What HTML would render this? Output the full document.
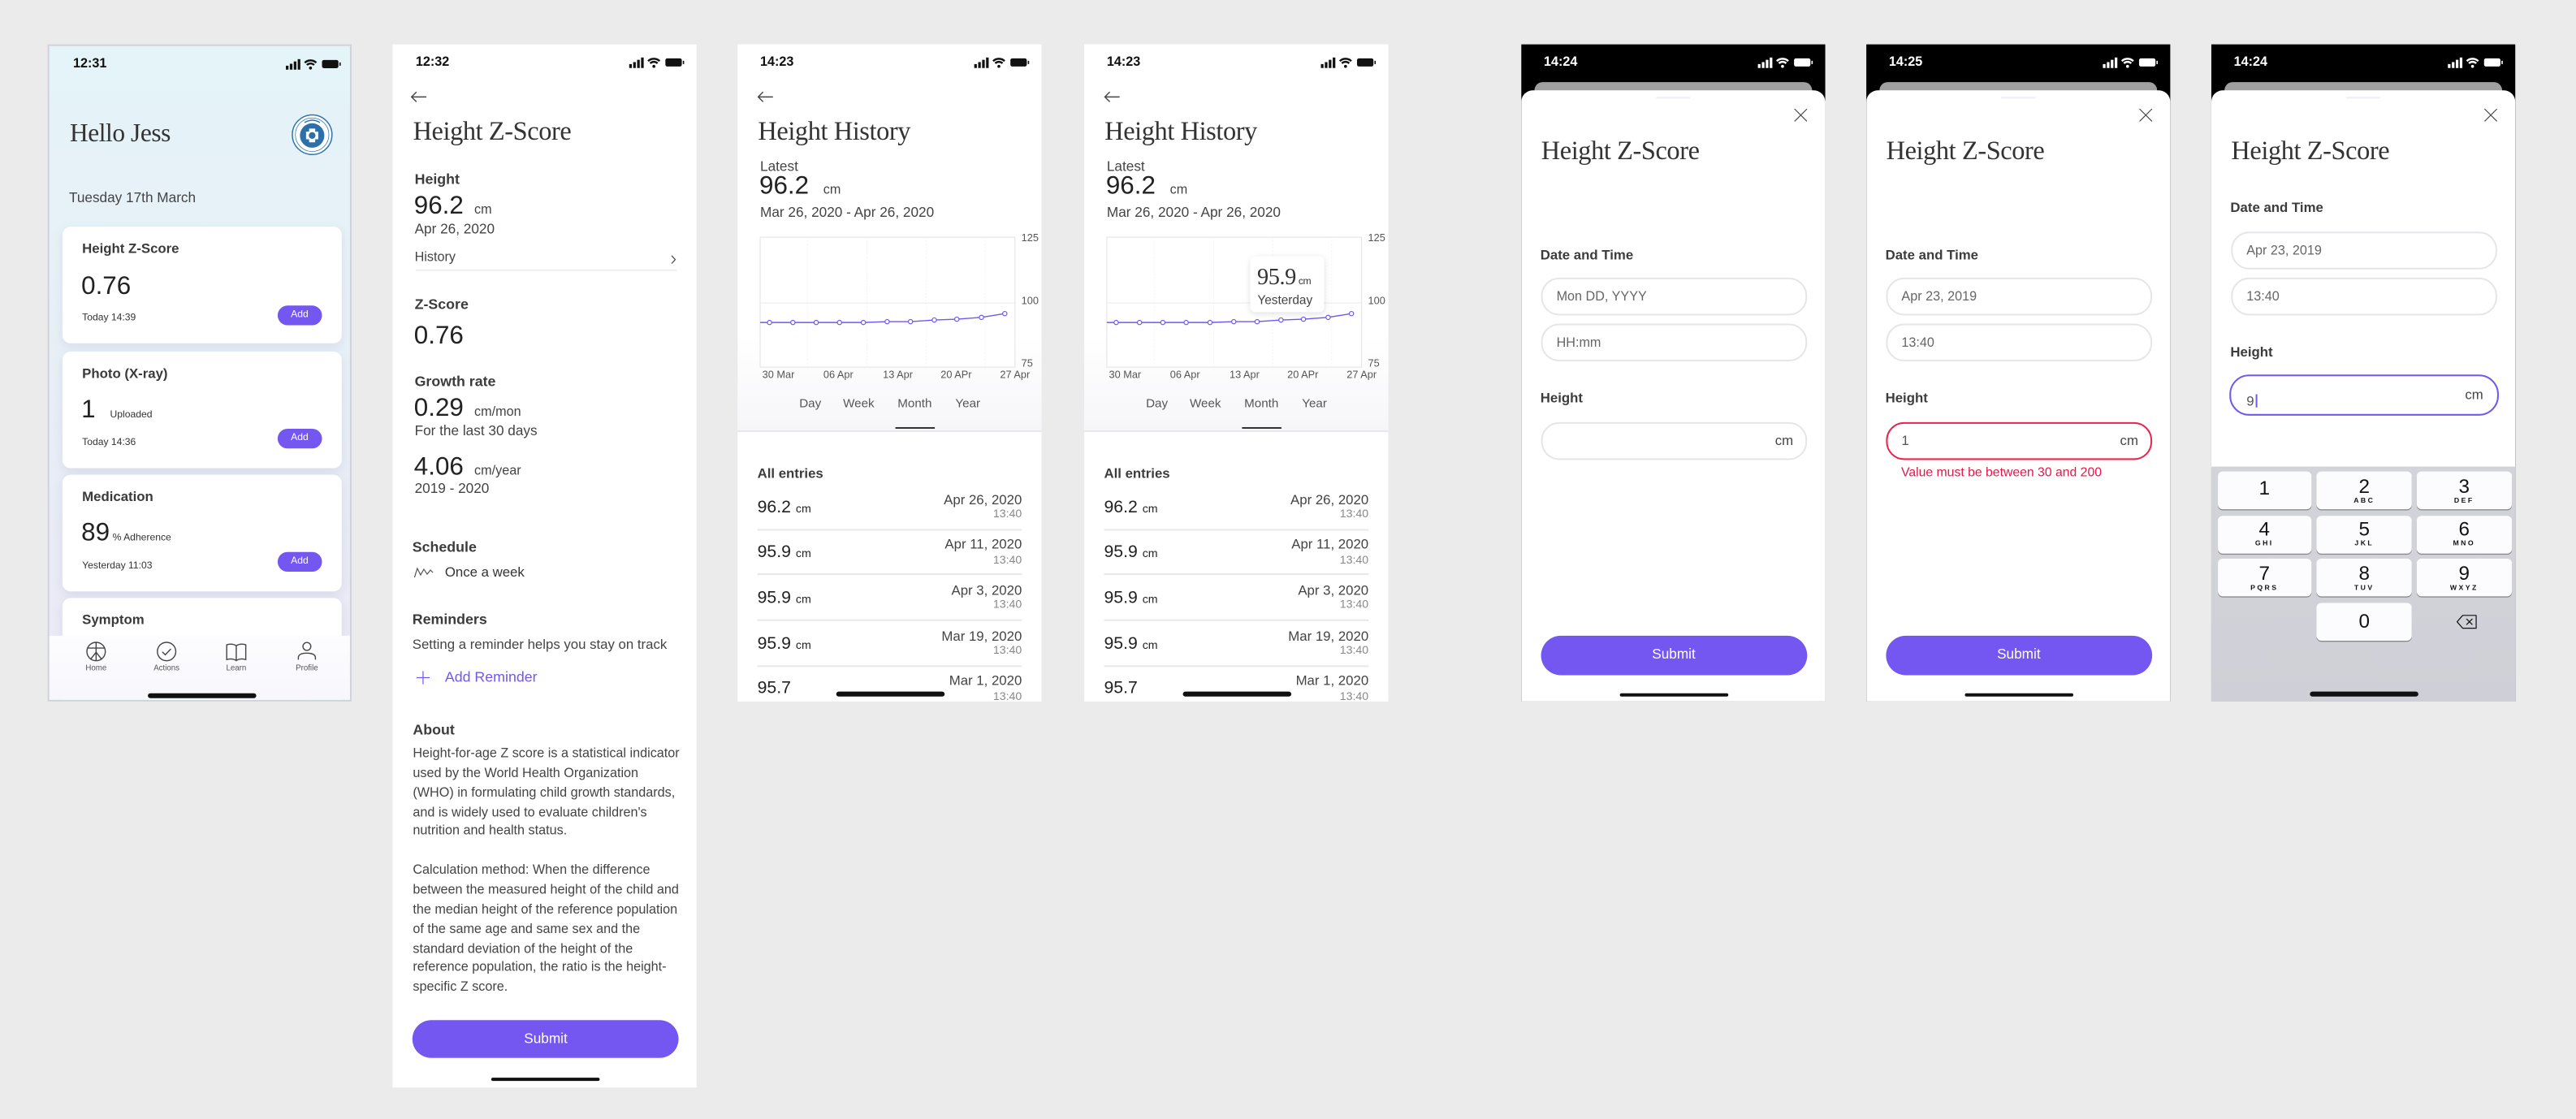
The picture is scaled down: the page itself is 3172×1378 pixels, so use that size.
<!DOCTYPE html>
<html><head><meta charset="utf-8">
<style>
*{margin:0;padding:0;box-sizing:border-box}
html,body{width:3172px;height:1378px;overflow:hidden;background:#ebebeb}
#w{position:absolute;left:0;top:0;width:1568px;height:681px;transform:scale(2.023);transform-origin:0 0;font-family:"Liberation Sans",sans-serif;color:#333}
.ph{position:absolute;top:27px;width:185px;height:400px;background:#fff;overflow:hidden}
.t{position:absolute;line-height:0;white-space:nowrap}
.serif{font-family:"Liberation Serif",serif;color:#333;letter-spacing:-0.2px}
.b{font-weight:bold}
.card{position:absolute;left:8px;width:169.6px;height:71px;background:#fff;border-radius:5px;box-shadow:0 2px 6px rgba(110,120,170,.14)}
.add{position:absolute;left:130.6px;top:47.6px;width:27.6px;height:11.6px;border-radius:6px;background:#7357f0}
.add span{position:absolute;left:0;right:0;top:5.8px;line-height:0;text-align:center;color:#fff;font-size:6px}
.hi{position:absolute;left:60px;width:66px;height:2.6px;border-radius:2px;background:#111}
.inp{position:absolute;left:11.6px;width:162.2px;height:23.3px;border:0.6px solid #e6e6ea;border-radius:11px;background:#fff}
.btn{position:absolute;left:11.8px;width:162px;height:23.8px;border-radius:12px;background:#7357f0;color:#fff;font-size:8.5px;text-align:center;line-height:23.8px}
.key{position:absolute;width:57.6px;height:23px;background:#fcfcfe;border-radius:3px;box-shadow:0 0.7px 0 #8a8b90;text-align:center}
.key .n{position:absolute;left:0;right:0;top:9px;font-size:12px;line-height:0;color:#111}
.key .l{position:absolute;left:0;right:0;top:17.5px;font-size:4.3px;line-height:0;font-weight:bold;letter-spacing:1.2px;color:#111}
</style></head><body><div id="w">

<div class="ph" style="left:29px;background:linear-gradient(180deg,#e4f4f8 0%,#e7f1f7 35%,#e9ebf5 80%,#ecebf6 100%);border:0.5px solid #cfd3da">
 <div class="t b" style="left:14.5px;top:11px;font-size:8px;color:#111">12:31</div>
 <svg style="position:absolute;left:143px;top:7px" width="36" height="8" viewBox="0 0 36 8"><rect x="1" y="5" width="1.6" height="2.4" fill="#111"/><rect x="3.4" y="3.8" width="1.6" height="3.6" fill="#111"/><rect x="5.8" y="2.4" width="1.6" height="5" fill="#111"/><rect x="8.2" y="1" width="1.6" height="6.4" fill="#111"/><path d="M12.5 3.2a5 5 0 0 1 7 0M13.8 4.6a3 3 0 0 1 4.4 0" stroke="#111" stroke-width="1.2" fill="none"/><circle cx="16" cy="6.4" r="0.9" fill="#111"/><rect x="23" y="1.5" width="10" height="5" rx="1.2" fill="#111"/><rect x="33.6" y="3" width="0.8" height="2" fill="#111"/></svg>
 <div class="t serif" style="left:12.5px;top:54px;font-size:15.5px">Hello Jess</div>
 <svg style="position:absolute;left:147.4px;top:41px" width="26" height="26" viewBox="0 0 28 28"><circle cx="14" cy="14" r="13" fill="#fff" stroke="#2b74b0" stroke-width="0.8"/><circle cx="14" cy="14" r="11" fill="none" stroke="#2b74b0" stroke-width="0.4"/><circle cx="14" cy="14.5" r="8" fill="#2d6fa8"/><path d="M10 12h8v5h-8z" fill="#fff"/><path d="M12 10h4v9h-4z" fill="#fff"/><circle cx="14" cy="14.5" r="2.2" fill="#2d6fa8"/><path d="M9 6q5-3 10 0" stroke="#2b74b0" stroke-width="0.8" fill="none"/></svg>
 <div class="t" style="left:12px;top:91.5px;font-size:8.5px;color:#444">Tuesday 17th March</div>

 <div class="card" style="top:110.4px">
  <div class="t b" style="left:12px;top:13px;font-size:8.3px;color:#3a3a3a">Height Z-Score</div>
  <div class="t" style="left:11.5px;top:36.5px;font-size:15.5px;color:#222">0.76</div>
  <div class="t" style="left:12px;top:56px;font-size:6px;color:#333">Today 14:39</div>
  <div class="add"><span>Add</span></div>
 </div>
 <div class="card" style="top:185.6px">
  <div class="t b" style="left:12px;top:13px;font-size:8.3px;color:#3a3a3a">Photo (X-ray)</div>
  <div class="t" style="left:11.5px;top:36.5px;font-size:15.5px;color:#222">1</div>
  <div class="t" style="left:29px;top:39.5px;font-size:6px;color:#333">Uploaded</div>
  <div class="t" style="left:12px;top:56px;font-size:6px;color:#333">Today 14:36</div>
  <div class="add"><span>Add</span></div>
 </div>
 <div class="card" style="top:260.6px">
  <div class="t b" style="left:12px;top:13px;font-size:8.3px;color:#3a3a3a">Medication</div>
  <div class="t" style="left:11.5px;top:36.5px;font-size:15.5px;color:#222">89</div>
  <div class="t" style="left:30.5px;top:39.5px;font-size:6px;color:#333">% Adherence</div>
  <div class="t" style="left:12px;top:56px;font-size:6px;color:#333">Yesterday 11:03</div>
  <div class="add"><span>Add</span></div>
 </div>
 <div class="card" style="top:336.3px">
  <div class="t b" style="left:12px;top:13px;font-size:8.3px;color:#3a3a3a">Symptom</div>
 </div>
 <div style="position:absolute;left:0;top:358.8px;width:185px;height:42px;background:linear-gradient(180deg,#fdfdff,#f7f6fc)"></div>
 <svg style="position:absolute;left:0;top:359px" width="185" height="30" viewBox="0 359 185 30">
  <g fill="none" stroke="#444" stroke-width="0.7">
   <circle cx="28.5" cy="368.6" r="5.6"/><path d="M28.5 363v11.2M23.5 366.5h10M28.5 369l-3.5 4.5M28.5 369l3.5 4.5"/>
   <circle cx="71.4" cy="368.6" r="5.6"/><path d="M68.8 368.8l1.8 1.8 3.4-3.6"/>
   <path d="M108 364.5q3-1 5.8 0.5v9q-2.8-1.5-5.8-0.5zM119.6 364.5q-3-1-5.8 0.5v9q2.8-1.5 5.8-0.5z"/>
   <circle cx="156.8" cy="365.5" r="2.4"/><path d="M151.6 373.6v-1.2q0-2.8 5.2-2.8t5.2 2.8v1.2"/>
  </g>
  <g font-size="4.8" fill="#555" text-anchor="middle" font-family="Liberation Sans"><text x="28.5" y="380">Home</text><text x="71.4" y="380">Actions</text><text x="113.8" y="380">Learn</text><text x="156.8" y="380">Profile</text></g>
 </svg>
 <div class="hi" style="top:394px"></div>
</div>

<div class="ph" style="left:239px;height:635px">
 <div class="t b" style="left:14px;top:11px;font-size:8px;color:#111">12:32</div>
 <svg style="position:absolute;left:143px;top:7px" width="36" height="8" viewBox="0 0 36 8"><rect x="1" y="5" width="1.6" height="2.4" fill="#111"/><rect x="3.4" y="3.8" width="1.6" height="3.6" fill="#111"/><rect x="5.8" y="2.4" width="1.6" height="5" fill="#111"/><rect x="8.2" y="1" width="1.6" height="6.4" fill="#111"/><path d="M12.5 3.2a5 5 0 0 1 7 0M13.8 4.6a3 3 0 0 1 4.4 0" stroke="#111" stroke-width="1.2" fill="none"/><circle cx="16" cy="6.4" r="0.9" fill="#111"/><rect x="23" y="1.5" width="10" height="5" rx="1.2" fill="#111"/><rect x="33.6" y="3" width="0.8" height="2" fill="#111"/></svg>
 <svg style="position:absolute;left:10px;top:28px" width="12" height="8" viewBox="0 0 12 8"><path d="M10.5 4H1.5M4.5 1L1.5 4l3 3" stroke="#444" stroke-width="0.7" fill="none"/></svg>
 <div class="t serif" style="left:12.4px;top:54px;font-size:16px">Height Z-Score</div>
 <div class="t b" style="left:13.4px;top:82px;font-size:8.8px;color:#3c3c3c">Height</div>
 <div class="t" style="left:13px;top:99px;font-size:15.5px;color:#222">96.2 <span style="font-size:8px;color:#444">&nbsp;cm</span></div>
 <div class="t" style="left:13.4px;top:112.2px;font-size:8.5px;color:#444">Apr 26, 2020</div>
 <div class="t" style="left:13.4px;top:129.8px;font-size:8px;color:#444">History</div>
 <svg style="position:absolute;left:168.5px;top:127.5px" width="4" height="6" viewBox="0 0 4 6"><path d="M0.8 0.6L3 3 0.8 5.4" stroke="#444" stroke-width="0.6" fill="none"/></svg>
 <div style="position:absolute;left:13.6px;top:137px;width:159.4px;height:0.8px;background:#eef0f3"></div>
 <div class="t b" style="left:13.4px;top:158px;font-size:8.8px;color:#3c3c3c">Z-Score</div>
 <div class="t" style="left:13px;top:177.6px;font-size:15.5px;color:#222">0.76</div>
 <div class="t b" style="left:13.4px;top:204.5px;font-size:8.8px;color:#3c3c3c">Growth rate</div>
 <div class="t" style="left:13px;top:221.6px;font-size:15.5px;color:#222">0.29 <span style="font-size:8px;color:#444">&nbsp;cm/mon</span></div>
 <div class="t" style="left:13.4px;top:235px;font-size:8.5px;color:#444">For the last 30 days</div>
 <div class="t" style="left:13px;top:257.5px;font-size:15.5px;color:#222">4.06 <span style="font-size:8px;color:#444">&nbsp;cm/year</span></div>
 <div class="t" style="left:13.4px;top:270.4px;font-size:8.5px;color:#444">2019 - 2020</div>
 <div class="t b" style="left:12px;top:306px;font-size:8.8px;color:#3c3c3c">Schedule</div>
 <svg style="position:absolute;left:13px;top:317px" width="12" height="8" viewBox="0 0 12 8"><path d="M0.3 7.5L2 2l2 4 2-3.5 2 3 2-2.5 1.5 1.5" stroke="#555" stroke-width="0.6" fill="none"/></svg>
 <div class="t" style="left:31.8px;top:321.3px;font-size:8.3px;color:#333">Once a week</div>
 <div class="t b" style="left:12px;top:349.8px;font-size:8.8px;color:#3c3c3c">Reminders</div>
 <div class="t" style="left:12px;top:364.5px;font-size:8.3px;color:#444">Setting a reminder helps you stay on track</div>
 <svg style="position:absolute;left:14px;top:381px" width="9" height="9" viewBox="0 0 9 9"><path d="M4.5 0.5v8M0.5 4.5h8" stroke="#7357f0" stroke-width="0.6"/></svg>
 <div class="t" style="left:31.8px;top:385.2px;font-size:8.8px;color:#7357f0">Add Reminder</div>
 <div class="t b" style="left:12.3px;top:417px;font-size:8.8px;color:#3c3c3c">About</div>
 <div style="position:absolute;left:12.3px;top:425.97px;font-size:8px;line-height:11.86px;color:#444;width:170px;white-space:nowrap">Height-for-age Z score is a statistical indicator<br>used by the World Health Organization<br>(WHO) in formulating child growth standards,<br>and is widely used to evaluate children's<br>nutrition and health status.<br><br>Calculation method: When the difference<br>between the measured height of the child and<br>the median height of the reference population<br>of the same age and same sex and the<br>standard deviation of the height of the<br>reference population, the ratio is the height-<br>specific Z score.</div>
 <div class="btn" style="left:12.3px;top:593.5px;width:161.8px;height:23.5px;line-height:23.5px">Submit</div>
 <div class="hi" style="top:628.7px"></div>
</div>

<div class="ph" style="left:449px" id="p3"></div>
<div class="ph" style="left:660px" id="p4"></div>
<div class="ph" style="left:926px;background:#000" id="p5"></div>
<div class="ph" style="left:1136px;background:#000" id="p6"></div>
<div class="ph" style="left:1346px;background:#000" id="p7"></div>

</div>
<script>
var SB=function(c){return '<svg style="position:absolute;left:143px;top:7px" width="36" height="8" viewBox="0 0 36 8"><rect x="1" y="5" width="1.6" height="2.4" fill="'+c+'"/><rect x="3.4" y="3.8" width="1.6" height="3.6" fill="'+c+'"/><rect x="5.8" y="2.4" width="1.6" height="5" fill="'+c+'"/><rect x="8.2" y="1" width="1.6" height="6.4" fill="'+c+'"/><path d="M12.5 3.2a5 5 0 0 1 7 0M13.8 4.6a3 3 0 0 1 4.4 0" stroke="'+c+'" stroke-width="1.2" fill="none"/><circle cx="16" cy="6.4" r="0.9" fill="'+c+'"/><rect x="23" y="1.5" width="10" height="5" rx="1.2" fill="'+c+'"/><rect x="33.6" y="3" width="0.8" height="2" fill="'+c+'"/></svg>';};
function hist(tip,time){
 var xs=[19.4,33.6,47.8,62,76.5,91,105.2,119.7,133.4,148.4,162.6],ys=[169.3,169.3,169.3,169.3,169.3,168.8,168.8,167.8,167.3,166.2,163.9];
 var pts='13.7,169.3 ';var c='';
 for(var i=0;i<xs.length;i++){pts+=xs[i]+','+ys[i]+' ';c+='<circle cx="'+xs[i]+'" cy="'+ys[i]+'" r="1.3" fill="#fff" stroke="#7357f0" stroke-width="0.6"/>';}
 var h='<div style="position:absolute;left:0;top:0;width:185px;height:236px;background:linear-gradient(180deg,#fff 0%,#fff 75%,#f6f6f9 100%)"></div>';
 h+='<div class="t b" style="left:13.7px;top:11px;font-size:8px;color:#111">'+time+'</div>'+SB('#111');
 h+='<svg style="position:absolute;left:11px;top:28px" width="12" height="8" viewBox="0 0 12 8"><path d="M10.5 4H1.5M4.5 1L1.5 4l3 3" stroke="#444" stroke-width="0.7" fill="none"/></svg>';
 h+='<div class="t serif" style="left:12.4px;top:54.3px;font-size:16px">Height History</div>';
 h+='<div class="t" style="left:13.7px;top:73.5px;font-size:8.5px;color:#444">Latest</div>';
 h+='<div class="t" style="left:13.2px;top:87px;font-size:15.5px;color:#222">96.2 <span style="font-size:8px;color:#444">&nbsp;&nbsp;cm</span></div>';
 h+='<div class="t" style="left:13.7px;top:101.6px;font-size:8.5px;color:#444">Mar 26, 2020 - Apr 26, 2020</div>';
 h+='<svg style="position:absolute;left:0;top:0" width="185" height="236" viewBox="0 0 185 236"><rect x="13.7" y="117.4" width="155.1" height="79.1" fill="#fff" stroke="#e2e2e6" stroke-width="0.5"/>'+
 '<g stroke="#f0f0f3" stroke-width="0.4" stroke-dasharray="1 1"><path d="M42.5 117.4v79M78.7 117.4v79M114.7 117.4v79M150.6 117.4v79"/></g><path d="M13.7 157.4h155.1" stroke="#e8e8ec" stroke-width="0.5"/>'+
 '<polyline points="'+pts+'" fill="none" stroke="#7357f0" stroke-width="0.7"/>'+c+
 '<g font-family="Liberation Sans" font-size="6.3" fill="#555"><text x="172.7" y="119.8">125</text><text x="172.7" y="158.2">100</text><text x="172.7" y="196.3">75</text>'+
 '<g text-anchor="middle"><text x="24.8" y="203.2">30 Mar</text><text x="61.3" y="203.2">06 Apr</text><text x="97.5" y="203.2">13 Apr</text><text x="133" y="203.2">20 APr</text><text x="168.8" y="203.2">27 Apr</text></g></g></svg>';
 var tabs=[['Day',44.2],['Week',73.7],['Month',107.8],['Year',140.1]];
 for(var j=0;j<4;j++)h+='<div class="t" style="left:'+(tabs[j][1]-20)+'px;width:40px;text-align:center;top:219.2px;font-size:7.5px;color:#555">'+tabs[j][0]+'</div>';
 h+='<div style="position:absolute;left:96px;top:232.6px;width:24.3px;height:0.9px;background:#333"></div>';
 h+='<div style="position:absolute;left:0;top:235px;width:185px;height:0.5px;background:#e8e8ec"></div>';
 h+='<div class="t b" style="left:12px;top:261.4px;font-size:8.3px;color:#3c3c3c">All entries</div>';
 var rows=[['96.2','Apr 26, 2020'],['95.9','Apr 11, 2020'],['95.9','Apr 3, 2020'],['95.9','Mar 19, 2020'],['95.7','Mar 1, 2020']];
 for(var k=0;k<5;k++){var y=281.5+27.7*k;
  h+='<div class="t" style="left:12px;top:'+y+'px;font-size:10.5px;color:#222">'+rows[k][0]+(k<4?' <span style="font-size:7px">cm</span>':'')+'</div>';
  h+='<div class="t" style="right:12px;top:'+(y-4.9)+'px;font-size:8.3px;color:#444">'+rows[k][1]+'</div>';
  h+='<div class="t" style="right:12px;top:'+(y+5.5)+'px;font-size:7px;color:#888">13:40</div>';
  if(k<4)h+='<div style="position:absolute;left:12px;top:'+(y+13.2)+'px;width:161px;height:0.5px;background:#e8e8ec"></div>';}
 if(tip){h+='<div style="position:absolute;left:101.3px;top:128.5px;width:44.5px;height:34.9px;background:#fff;border-radius:3px;box-shadow:0 1px 4px rgba(0,0,0,.12)"></div>'+
  '<div class="t serif" style="left:105.2px;top:142.7px;font-size:14px;color:#333">95.9<span style="font-size:6px;font-family:Liberation Sans"> cm</span></div>'+
  '<div class="t" style="left:105.4px;top:156.2px;font-size:7.6px;color:#444">Yesterday</div>';}
 h+='<div class="hi" style="top:394px"></div>';
 return h;}
document.getElementById('p3').innerHTML=hist(false,'14:23');
document.getElementById('p4').innerHTML=hist(true,'14:23');

function sheet(time,o){
 var h='<div class="t b" style="left:13.7px;top:11.3px;font-size:8px;color:#fff">'+time+'</div>'+SB('#fff');
 h+='<div style="position:absolute;left:7.8px;top:22.7px;width:169.2px;height:10px;border-radius:5px 5px 0 0;background:#a0a0a0"></div>';
 h+='<div style="position:absolute;left:0;top:27.7px;width:185px;height:380px;border-radius:7px 7px 0 0;background:#fff"></div>';
 h+='<div style="position:absolute;left:82px;top:31.7px;width:21.4px;height:1.3px;border-radius:1px;background:#eeeef8"></div>';
 h+='<svg style="position:absolute;left:166px;top:39.3px" width="8.2" height="8.2" viewBox="0 0 8 8"><path d="M0.3 0.3l7.4 7.4M7.7 0.3L0.3 7.7" stroke="#444" stroke-width="0.55"/></svg>';
 h+='<div class="t serif" style="left:12.1px;top:'+o.ty+'px;font-size:16px">Height Z-Score</div>';
 h+='<div class="t b" style="left:11.6px;top:'+o.dy+'px;font-size:8.3px;color:#3c3c3c">Date and Time</div>';
 h+='<div class="inp" style="top:'+o.i1+'px"></div><div class="t" style="left:21.4px;top:'+(o.i1+11.6)+'px;font-size:8px;color:#666">'+o.v1+'</div>';
 h+='<div class="inp" style="top:'+(o.i1+28.2)+'px"></div><div class="t" style="left:21.4px;top:'+(o.i1+39.8)+'px;font-size:8px;color:#666">'+o.v2+'</div>';
 h+='<div class="t b" style="left:11.6px;top:'+o.hy+'px;font-size:8.3px;color:#3c3c3c">Height</div>';
 h+='<div class="inp" style="top:'+o.i3+'px;'+o.st+'"></div>';
 h+='<div class="t" style="right:19.5px;top:'+(o.i3+11.7)+'px;font-size:8.3px;color:#444">cm</div>';
 if(o.v3)h+='<div class="t" style="left:21.4px;top:'+(o.i3+11.7)+'px;font-size:8.3px;color:#555">'+o.v3+'</div>';
 return h;}
var p5=sheet('14:24',{ty:66,dy:127.5,i1:141.9,v1:'Mon DD, YYYY',v2:'HH:mm',hy:215.1,i3:229.6,st:''});
p5+='<div class="btn" style="top:359.9px">Submit</div><div class="hi" style="top:394.5px"></div>';
document.getElementById('p5').innerHTML=p5;
var p6=sheet('14:25',{ty:66,dy:127.5,i1:141.9,v1:'Apr 23, 2019',v2:'13:40',hy:215.1,i3:229.6,st:'border:0.8px solid #e8254f',v3:'1'});
p6+='<div class="t" style="left:21.2px;top:261.1px;font-size:7.8px;color:#e8154a">Value must be between 30 and 200</div>';
p6+='<div class="btn" style="top:359.9px">Submit</div><div class="hi" style="top:394.5px"></div>';
document.getElementById('p6').innerHTML=p6;
var p7=sheet('14:24',{ty:65.7,dy:99.3,i1:114,v1:'Apr 23, 2019',v2:'13:40',hy:187,i3:201,st:'left:10.8px;width:164px;height:24.8px;border:1px solid #7357f0;border-radius:12px',v3:'9<span style="display:inline-block;width:0.9px;height:8px;background:#7357f0;vertical-align:-1px;margin-left:0.5px"></span>'});
p7+='<div style="position:absolute;left:0;top:257px;width:185px;height:143px;background:linear-gradient(180deg,#d3d4d9,#cfd0d7)"></div>';
var keys=[['1',''],['2','ABC'],['3','DEF'],['4','GHI'],['5','JKL'],['6','MNO'],['7','PQRS'],['8','TUV'],['9','WXYZ']];
var cx=[3.5,64.3,125.1],ry=[260,286.8,313.2,339.8];
for(var i=0;i<9;i++){var r=Math.floor(i/3),c=i%3;
 p7+='<div class="key" style="left:'+cx[c]+'px;top:'+ry[r]+'px"><div class="n" style="top:'+(keys[i][1]?'8.6px':'9.5px')+'">'+keys[i][0]+'</div>'+(keys[i][1]?'<div class="l">'+keys[i][1]+'</div>':'')+'</div>';}
p7+='<div class="key" style="left:64.3px;top:339.8px"><div class="n" style="top:11px">0</div></div>';
p7+='<svg style="position:absolute;left:149px;top:346.5px" width="13" height="9" viewBox="0 0 13 9"><path d="M4 0.6h8.2v7.8H4L0.6 4.5z" fill="none" stroke="#111" stroke-width="0.6" stroke-linejoin="round"/><path d="M6.3 2.7l3.6 3.6M9.9 2.7L6.3 6.3" stroke="#111" stroke-width="0.6"/></svg>';
p7+='<div class="hi" style="top:394.3px"></div>';
document.getElementById('p7').innerHTML=p7;
</script>
</body></html>
